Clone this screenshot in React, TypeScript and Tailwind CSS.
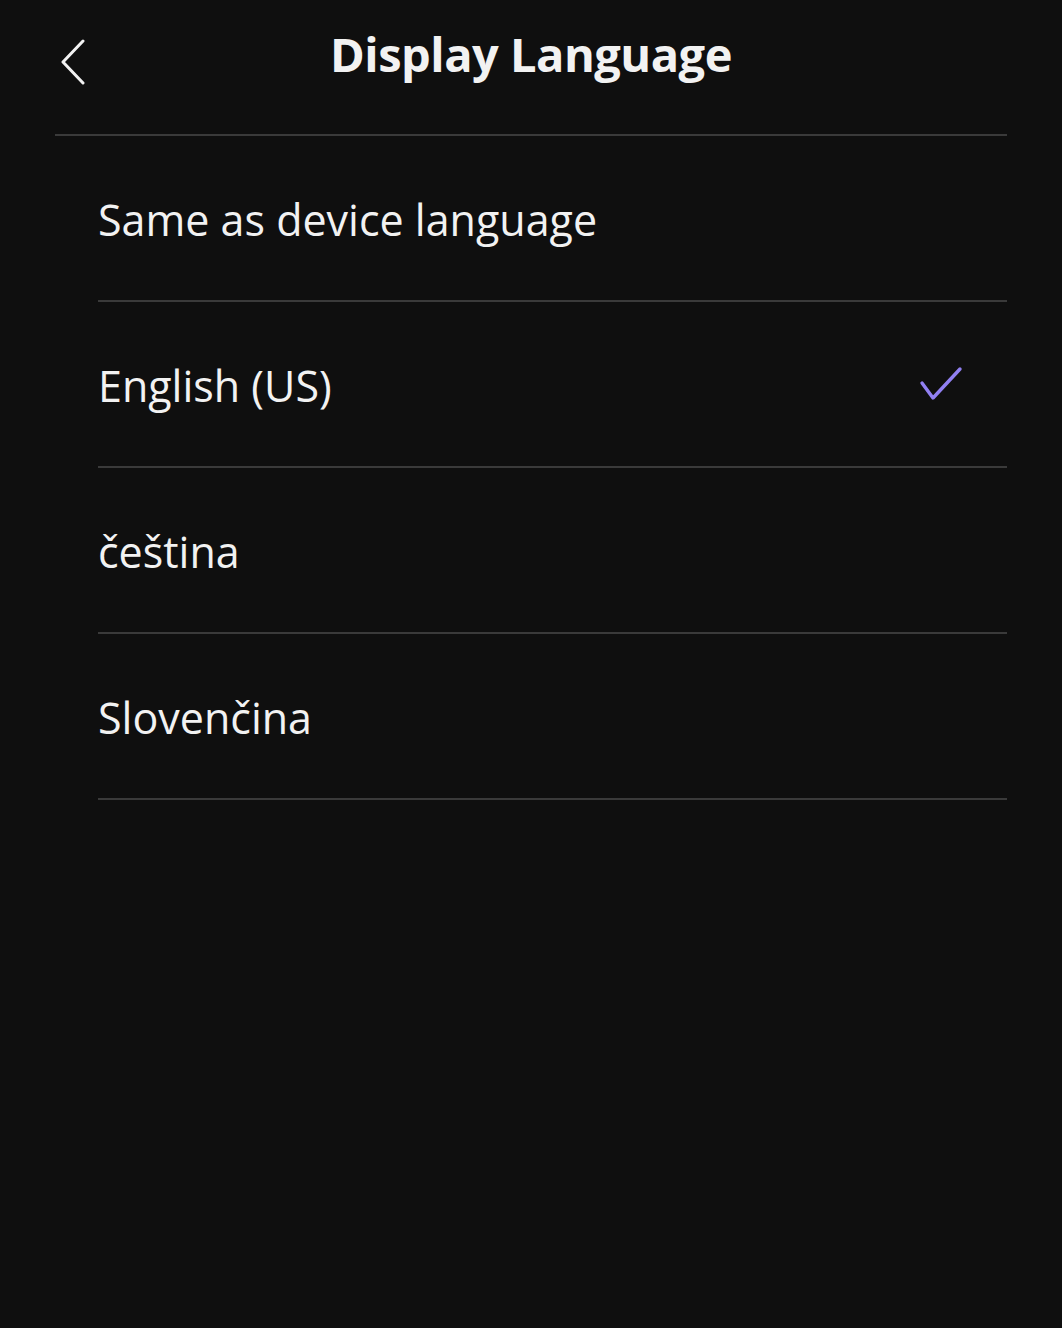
const languages = [
  { label: 'Same as device language', selected: false },
  { label: 'English (US)', selected: true },
  { label: 'čeština', selected: false },
  { label: 'Slovenčina', selected: false },
];

export default function App() {
  return (
    <div
      className="w-[1062px] h-[1328px] bg-[#0f0f0f] text-[#f2f2f2]"
      style={{ fontFamily: '"Open Sans", "Noto Sans", sans-serif' }}
    >
      {/* Header */}
      <div className="relative h-[136px] mx-[55px] flex items-center justify-center border-b-2 border-[#3a3a3a]">
        <button className="absolute left-[2px] top-[38px] w-[30px] h-[48px] flex items-center justify-center">
          <svg width="26" height="46" viewBox="0 0 26 46" fill="none">
            <path d="M24 2 L4 23 L24 44" stroke="#f2f2f2" strokeWidth="3" strokeLinecap="round" strokeLinejoin="round" />
          </svg>
        </button>
        <h1 className="text-[47px] font-bold tracking-[-0.5px] leading-none -mt-[26px]">Display Language</h1>
      </div>

      {/* Options */}
      <ul className="ml-[98px] mr-[55px]">
        {languages.map((l) => (
          <li
            key={l.label}
            className="h-[166px] flex items-center justify-between border-b-2 border-[#3a3a3a] pr-[44px]"
          >
            <span className="text-[43px] leading-none pt-[3px]">{l.label}</span>
            {l.selected && (
              <svg width="44" height="38" viewBox="0 0 44 38" fill="none" className="mt-[2px] ml-[2px]">
                <path d="M3 17 L14 32 L41 3" stroke="#9180f2" strokeWidth="3.4" strokeLinecap="round" strokeLinejoin="round" />
              </svg>
            )}
          </li>
        ))}
      </ul>
    </div>
  );
}
